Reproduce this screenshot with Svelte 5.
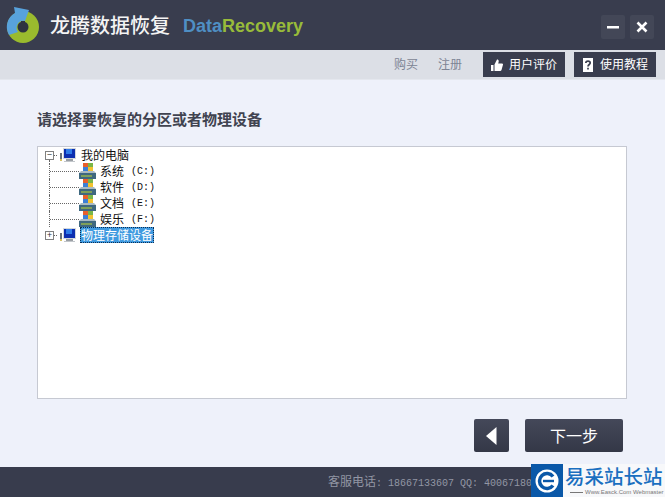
<script>
	const drives = [
		{ name: '系统', letter: '(C:)' },
		{ name: '软件', letter: '(D:)' },
		{ name: '文档', letter: '(E:)' },
		{ name: '娱乐', letter: '(F:)' }
	];
</script>

{#snippet pcIcon()}
	<svg class="node-icon" width="24" height="16" viewBox="0 0 24 16">
		<path d="M0 8.500h4" stroke="#666" stroke-dasharray="1 1" />
		<rect x="6" y="6" width="2" height="8" fill="#6b7278" />
		<rect x="6" y="12" width="2" height="2" fill="#d8c060" />
		<rect x="9" y="1" width="13" height="11" fill="#d4d8dc" />
		<rect x="10" y="2" width="11" height="9" fill="#0d2fb0" />
		<rect x="12" y="2" width="6" height="5" fill="#2f7be8" />
		<rect x="12" y="12" width="7" height="2" fill="#9a9fa5" />
		<rect x="10" y="14" width="11" height="1" fill="#c3c7cb" />
	</svg>
{/snippet}

{#snippet driveIcon()}
	<svg class="node-icon" width="17" height="16" viewBox="0 0 17 16">
		<rect x="4" y="0" width="5" height="4" fill="#e8602c" />
		<rect x="9" y="0" width="5" height="4" fill="#7ab648" />
		<rect x="4" y="4" width="5" height="4" fill="#3d7fd6" />
		<rect x="9" y="4" width="5" height="4" fill="#f2c230" />
		<path d="M2 8h13l2 2v6H0v-6z" fill="#a9bac4" />
		<rect x="0" y="10" width="17" height="6" fill="#3f6880" />
		<rect x="2" y="12" width="11" height="2" fill="#7fa05a" />
	</svg>
{/snippet}

<div class="window">
	<header class="titlebar">
		<svg class="logo" width="34" height="38" viewBox="0 0 34 38">
			<circle cx="17" cy="21" r="16" fill="#9abb2e" />
			<path d="M3 29A16 16 0 0 1 9 7L8 1L23 4L19 15A7 7 0 0 0 12 26z" fill="#58a2dc" />
			<circle cx="17" cy="21" r="5.500" fill="#2e3340" />
			<path d="M15 15h4v3h-4z" fill="#2e3340" />
		</svg>
		<h1>龙腾数据恢复</h1>
		<span class="brand"><span class="data">Data</span><span class="recovery">Recovery</span></span>
		<div class="win-buttons">
			<button class="win-btn" aria-label="最小化">
				<svg width="12" height="12" viewBox="0 0 12 12"><rect x="0" y="5" width="12" height="2.500" fill="#fff" /></svg>
			</button>
			<button class="win-btn" aria-label="关闭">
				<svg width="12" height="12" viewBox="0 0 12 12"><path d="M1.500 1.500l9 9M10.500 1.500l-9 9" stroke="#fff" stroke-width="2.600" /></svg>
			</button>
		</div>
	</header>

	<nav class="toolbar">
		<a class="buy" href="#buy">购买</a>
		<a class="register" href="#register">注册</a>
		<button class="tool-btn">
			<svg width="12" height="12" viewBox="0 0 12 12"><path d="M0 6h2.500v6H0zM3.500 5.500L6 .5c1.500 0 2 1 1.600 2.500L7.200 4.500H11c1 0 1.200 1 .9 1.600L10.500 11c-.2.700-.7 1-1.400 1H3.500z" fill="#fff" /></svg>
			<span>用户评价</span>
		</button>
		<button class="tool-btn">
			<svg width="12" height="14" viewBox="0 0 12 14"><path d="M1 0h10v14H1z" fill="#fff" /><path d="M3.800 5C3.800 2.400 8.200 2.400 8.200 5 8.200 6.500 6 6.500 6 8.500M6 9.800v1.700" stroke="#383c4d" stroke-width="1.700" fill="none" /></svg>
			<span>使用教程</span>
		</button>
	</nav>

	<main class="content">
		<h2>请选择要恢复的分区或者物理设备</h2>
		<div class="tree">
			<div class="row">
				<span class="expander open">−</span>
				{@render pcIcon()}
				<span class="label">我的电脑</span>
			</div>
			{#each drives as drive}
				<div class="row child">
					<span class="branch"></span>
					{@render driveIcon()}
					<span class="label">{drive.name}</span>
					<span class="letter">{drive.letter}</span>
				</div>
			{/each}
			<div class="row">
				<span class="expander">+</span>
				{@render pcIcon()}
				<span class="label selected">物理存储设备</span>
			</div>
		</div>
		<div class="actions">
			<button class="back" aria-label="上一步">
				<svg width="11" height="18" viewBox="0 0 11 18"><path d="M10.500 0v18L0 9z" fill="#fff" /></svg>
			</button>
			<button class="next"><span>下一步</span></button>
		</div>
	</main>

	<footer class="statusbar">
		<span class="status-text">客服电话<span class="digits">: 18667133607 QQ: 40067180</span></span>
	</footer>

	<div class="watermark">
		<span class="mark">
			<svg width="24" height="24" viewBox="0 0 24 24">
				<circle cx="12" cy="12" r="11.500" fill="#fff" />
				<path d="M18 7.500A7.500 7.500 0 1 0 18 16.500" stroke="#0a58a8" stroke-width="3.500" fill="none" />
				<rect x="8" y="10.800" width="11" height="2.400" fill="#0a58a8" />
			</svg>
		</span>
		<div class="mark-text">
			<strong>易采站长站</strong>
			<small><i></i>Www.Easck.Com Webmaster</small>
		</div>
	</div>
</div>

<style>
	:global(body) {
		margin: 0;
	}

	.window {
		position: relative;
		display: flex;
		flex-direction: column;
		width: 665px;
		height: 497px;
		overflow: hidden;
		background: #eef1fa;
		font-family: 'Noto Sans CJK SC', 'Liberation Sans', sans-serif;
	}

	button {
		border: 0;
		padding: 0;
		font-family: inherit;
		color: #fff;
		cursor: pointer;
	}

	.titlebar {
		display: flex;
		align-items: center;
		flex: none;
		height: 50px;
		padding: 0 11px 0 6px;
		box-sizing: border-box;
		background: #393d4e;
	}

	.logo {
		flex: none;
	}

	h1 {
		margin: 0 0 0 10px;
		font-size: 20px;
		font-weight: 500;
		line-height: 50px;
		color: #f4f4f4;
		white-space: nowrap;
	}

	.brand {
		margin: 3px 0 0 13px;
		font-family: 'Liberation Sans', sans-serif;
		font-size: 18px;
		font-weight: 700;
	}

	.data {
		color: #4f8fc4;
	}

	.recovery {
		color: #98bb3a;
	}

	.win-buttons {
		display: flex;
		gap: 5px;
		margin-left: auto;
		margin-top: 3px;
	}

	.win-btn {
		display: flex;
		align-items: center;
		justify-content: center;
		width: 24px;
		height: 24px;
		background: #434757;
		border-radius: 2px;
	}

	.toolbar {
		display: flex;
		align-items: center;
		flex: none;
		justify-content: flex-end;
		height: 30px;
		padding-right: 9px;
		box-sizing: border-box;
		background: #dcdfe6;
		border-bottom: 1px solid #e4e7ee;
	}

	.toolbar a {
		padding-bottom: 2px;
		font-size: 12px;
		color: #7d8494;
		text-decoration: none;
	}

	.register {
		margin-left: 20px;
	}

	.tool-btn {
		display: flex;
		align-items: center;
		justify-content: center;
		gap: 6px;
		width: 82px;
		height: 25px;
		margin-left: 9px;
		font-size: 12px;
		background: #393d4e;
	}

	.tool-btn span {
		padding-bottom: 2px;
	}

	.register + .tool-btn {
		margin-left: 21px;
	}

	.content {
		flex: 1;
		display: flex;
		flex-direction: column;
		padding: 0 38px 0 37px;
		min-height: 0;
	}

	h2 {
		margin: 29px 0 17px;
		font-size: 15px;
		font-weight: 700;
		line-height: 20px;
		color: #404350;
	}

	.tree {
		position: relative;
		height: 253px;
		padding: 0 0 0 7px;
		box-sizing: border-box;
		background: #fff;
		border: 1px solid #c6c9d2;
	}

	.row {
		display: flex;
		align-items: center;
		height: 16px;
		font-size: 12px;
		line-height: 16px;
		color: #111;
	}

	.expander {
		position: relative;
		flex: none;
		width: 7px;
		height: 7px;
		font-size: 9px;
		line-height: 6px;
		text-align: center;
		background: #fff;
		border: 1px solid #808080;
		color: #333;
		box-sizing: content-box;
	}

	/* joins the expander to the dotted line of the first child */
	.expander.open::after {
		content: '';
		position: absolute;
		top: 8px;
		left: 3px;
		height: 4px;
		border-left: 1px dotted #666;
	}

	.node-icon {
		flex: none;
	}

	.branch {
		flex: none;
		width: 30px;
		height: 16px;
		margin-left: 4px;
		box-sizing: border-box;
		border-left: 1px dotted #666;
		background: repeating-linear-gradient(90deg, #666 0 1px, transparent 1px 2px) 0 8px / 100% 1px no-repeat;
	}

	.label {
		margin-left: 2px;
		padding: 0 1px;
		white-space: nowrap;
	}

	.child .label {
		margin-left: 3px;
	}

	.letter {
		margin: 1px 0 0 6px;
		font-family: 'Liberation Mono', monospace;
		font-size: 10px;
	}

	.selected {
		color: #fff;
		background: #3f9ae0;
		outline: 1px dotted #0b2f55;
		outline-offset: -1px;
	}

	.actions {
		display: flex;
		justify-content: flex-end;
		gap: 16px;
		margin-top: 20px;
		padding-right: 4px;
	}

	.back,
	.next {
		display: flex;
		align-items: center;
		justify-content: center;
		height: 33px;
		background: linear-gradient(#444859, #343847);
		border-radius: 2px;
	}

	.back {
		width: 35px;
	}

	.next {
		width: 98px;
		font-size: 16px;
	}

	.next span {
		padding-bottom: 2px;
	}

	.statusbar {
		display: flex;
		align-items: center;
		flex: none;
		height: 30px;
		padding: 0 0 4px 328px;
		box-sizing: border-box;
		background: #383c4d;
		font-size: 12px;
		color: #9296a4;
	}

	.status-text {
		width: 203px;
		overflow: hidden;
		white-space: nowrap;
	}

	.digits {
		font-family: 'Liberation Mono', monospace;
		font-size: 10px;
	}

	.watermark {
		position: absolute;
		right: 0;
		bottom: 0;
		display: flex;
		width: 134px;
		height: 33px;
		background: #f7f8fa;
	}

	.mark {
		display: flex;
		align-items: center;
		justify-content: center;
		flex: none;
		width: 32px;
		height: 33px;
		background: #0a58a8;
	}

	.mark-text {
		display: flex;
		flex-direction: column;
		min-width: 0;
		margin-left: 2px;
		white-space: nowrap;
	}

	.mark-text strong {
		font-size: 19.500px;
		font-weight: 500;
		line-height: 24px;
		color: #1a6fc0;
	}

	.mark-text small {
		display: flex;
		align-items: center;
		padding-left: 5px;
		font-family: 'Liberation Sans', sans-serif;
		font-size: 6px;
		line-height: 8px;
		color: #777;
	}

	.mark-text i {
		width: 13px;
		height: 1px;
		margin-right: 2px;
		background: #777;
	}
</style>
